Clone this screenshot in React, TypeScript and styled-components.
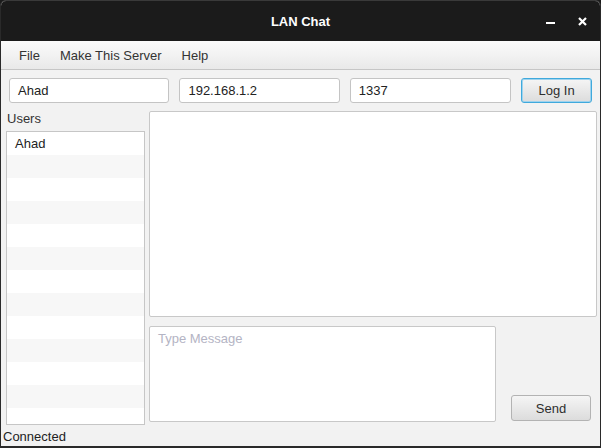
import React from "react";
import styled, { createGlobalStyle } from "styled-components";

const Global = createGlobalStyle`
  html, body { margin: 0; padding: 0; background: #1b1b1b; }
  body { font-family: "Liberation Sans", Arial, sans-serif; }
  * { box-sizing: border-box; }
`;

const Window = styled.div`
  width: 601px;
  height: 448px;
  display: flex;
  flex-direction: column;
  background: #f2f2f2;
  border: 1px solid #2a2a2a;
  border-bottom-width: 2px;
  border-top-color: #3a3a3a;
  border-radius: 6px 6px 0 0;
  overflow: hidden;
  font-size: 13px;
  color: #2b2b2b;
`;

const TitleBar = styled.div`
  height: 40px;
  flex: none;
  background: #1b1b1b;
  display: grid;
  grid-template-columns: 1fr auto 1fr;
  align-items: center;
  color: #fff;
`;

const Title = styled.div`
  font-weight: bold;
  font-size: 13px;
  grid-column: 2;
  padding-top: 1px;
`;

const Controls = styled.div`
  grid-column: 3;
  justify-self: end;
  display: flex;
  align-items: center;
  gap: 23px;
  padding-right: 13px;
`;

const CtrlIcon = styled.svg`
  display: block;
`;

const MenuBar = styled.div`
  height: 29px;
  flex: none;
  display: flex;
  align-items: center;
  gap: 20px;
  padding-left: 18px;
  background: linear-gradient(#fbfbfb, #e9e9e9);
  border-bottom: 1px solid #c6c6c6;
  color: #333;
`;

const MenuItem = styled.span`
  font-size: 13px;
`;

const Body = styled.div`
  flex: 1;
  display: flex;
  flex-direction: column;
  padding: 8px 2px 0 5px;
`;

const FieldRow = styled.div`
  display: flex;
  gap: 10px;
  padding: 0 6px 0 3px;
  height: 25px;
`;

const Field = styled.div<{ $w: number }>`
  width: ${(p) => p.$w}px;
  height: 25px;
  background: #fff;
  border: 1px solid #c4c4c4;
  border-radius: 3px;
  padding-left: 8px;
  display: flex;
  align-items: center;
  font-size: 13px;
  color: #222;
`;

const Button = styled.div<{ $focus?: boolean; $w: number; $h: number }>`
  width: ${(p) => p.$w}px;
  height: ${(p) => p.$h}px;
  display: flex;
  align-items: center;
  justify-content: center;
  border-radius: 3px;
  border: 1px solid ${(p) => (p.$focus ? "#3fa9dc" : "#b3b3b3")};
  box-shadow: ${(p) => (p.$focus ? "0 0 0 1px #9fd3ee inset" : "none")};
  background: linear-gradient(#f5f5f5, #dcdcdc);
  font-size: 13px;
  color: #2e2e2e;
`;

const Main = styled.div`
  flex: 1;
  display: flex;
  gap: 4px;
  margin-top: 8px;
`;

const LeftCol = styled.div`
  width: 139px;
  display: flex;
  flex-direction: column;
  margin-top: 1px;
`;

const Label = styled.div`
  height: 19px;
  padding-left: 1px;
  font-size: 13px;
  line-height: 14px;
  color: #333;
`;

const List = styled.div`
  height: 294px;
  background: #fff;
  border: 1px solid #c6c6c6;
  overflow: hidden;
`;

const ListRow = styled.div<{ $odd: boolean }>`
  height: 23px;
  background: ${(p) => (p.$odd ? "#f7f7f7" : "#fff")};
  padding-left: 8px;
  display: flex;
  align-items: center;
  font-size: 13px;
  color: #222;
`;

const RightCol = styled.div`
  flex: 1;
  display: flex;
  flex-direction: column;
  gap: 9px;
`;

const ChatBox = styled.div`
  height: 206px;
  background: #fff;
  border: 1px solid #c8c8c8;
  border-radius: 2px;
  margin-right: 1px;
`;

const BottomRow = styled.div`
  display: flex;
  align-items: flex-end;
  gap: 15px;
`;

const MessageBox = styled.div`
  width: 347px;
  height: 96px;
  background: #fff;
  border: 1px solid #c8c8c8;
  border-radius: 2px;
  padding: 4px 8px;
  color: #b4b4c4;
  font-size: 13px;
`;

const SendWrap = styled.div`
  padding-bottom: 1px;
`;

const Status = styled.div`
  height: 22px;
  padding-left: 2px;
  margin-left: -5px;
  display: flex;
  align-items: center;
  font-size: 13px;
  color: #222;
  margin-top: auto;
`;

export default function App() {
  const rows = Array.from({ length: 13 }, (_, i) => i);
  return (
    <>
      <Global />
      <Window>
        <TitleBar>
          <Title>LAN Chat</Title>
          <Controls>
            <CtrlIcon width="9" height="9" viewBox="0 0 9 9">
              <rect x="0" y="5" width="9" height="2" fill="#fff" />
            </CtrlIcon>
            <CtrlIcon width="9" height="9" viewBox="0 0 9 9">
              <path d="M1 1L8 8M8 1L1 8" stroke="#fff" strokeWidth="2.2" />
            </CtrlIcon>
          </Controls>
        </TitleBar>
        <MenuBar>
          <MenuItem>File</MenuItem>
          <MenuItem>Make This Server</MenuItem>
          <MenuItem>Help</MenuItem>
        </MenuBar>
        <Body>
          <FieldRow>
            <Field $w={161}>Ahad</Field>
            <Field $w={161}>192.168.1.2</Field>
            <Field $w={162}>1337</Field>
            <Button $focus $w={71} $h={25}>Log In</Button>
          </FieldRow>
          <Main>
            <LeftCol>
              <Label>Users</Label>
              <List>
                {rows.map((i) => (
                  <ListRow key={i} $odd={i % 2 === 1}>
                    {i === 0 ? "Ahad" : ""}
                  </ListRow>
                ))}
              </List>
            </LeftCol>
            <RightCol>
              <ChatBox />
              <BottomRow>
                <MessageBox>Type Message</MessageBox>
                <SendWrap>
                  <Button $w={80} $h={26}>Send</Button>
                </SendWrap>
              </BottomRow>
            </RightCol>
          </Main>
          <Status>Connected</Status>
        </Body>
      </Window>
    </>
  );
}
